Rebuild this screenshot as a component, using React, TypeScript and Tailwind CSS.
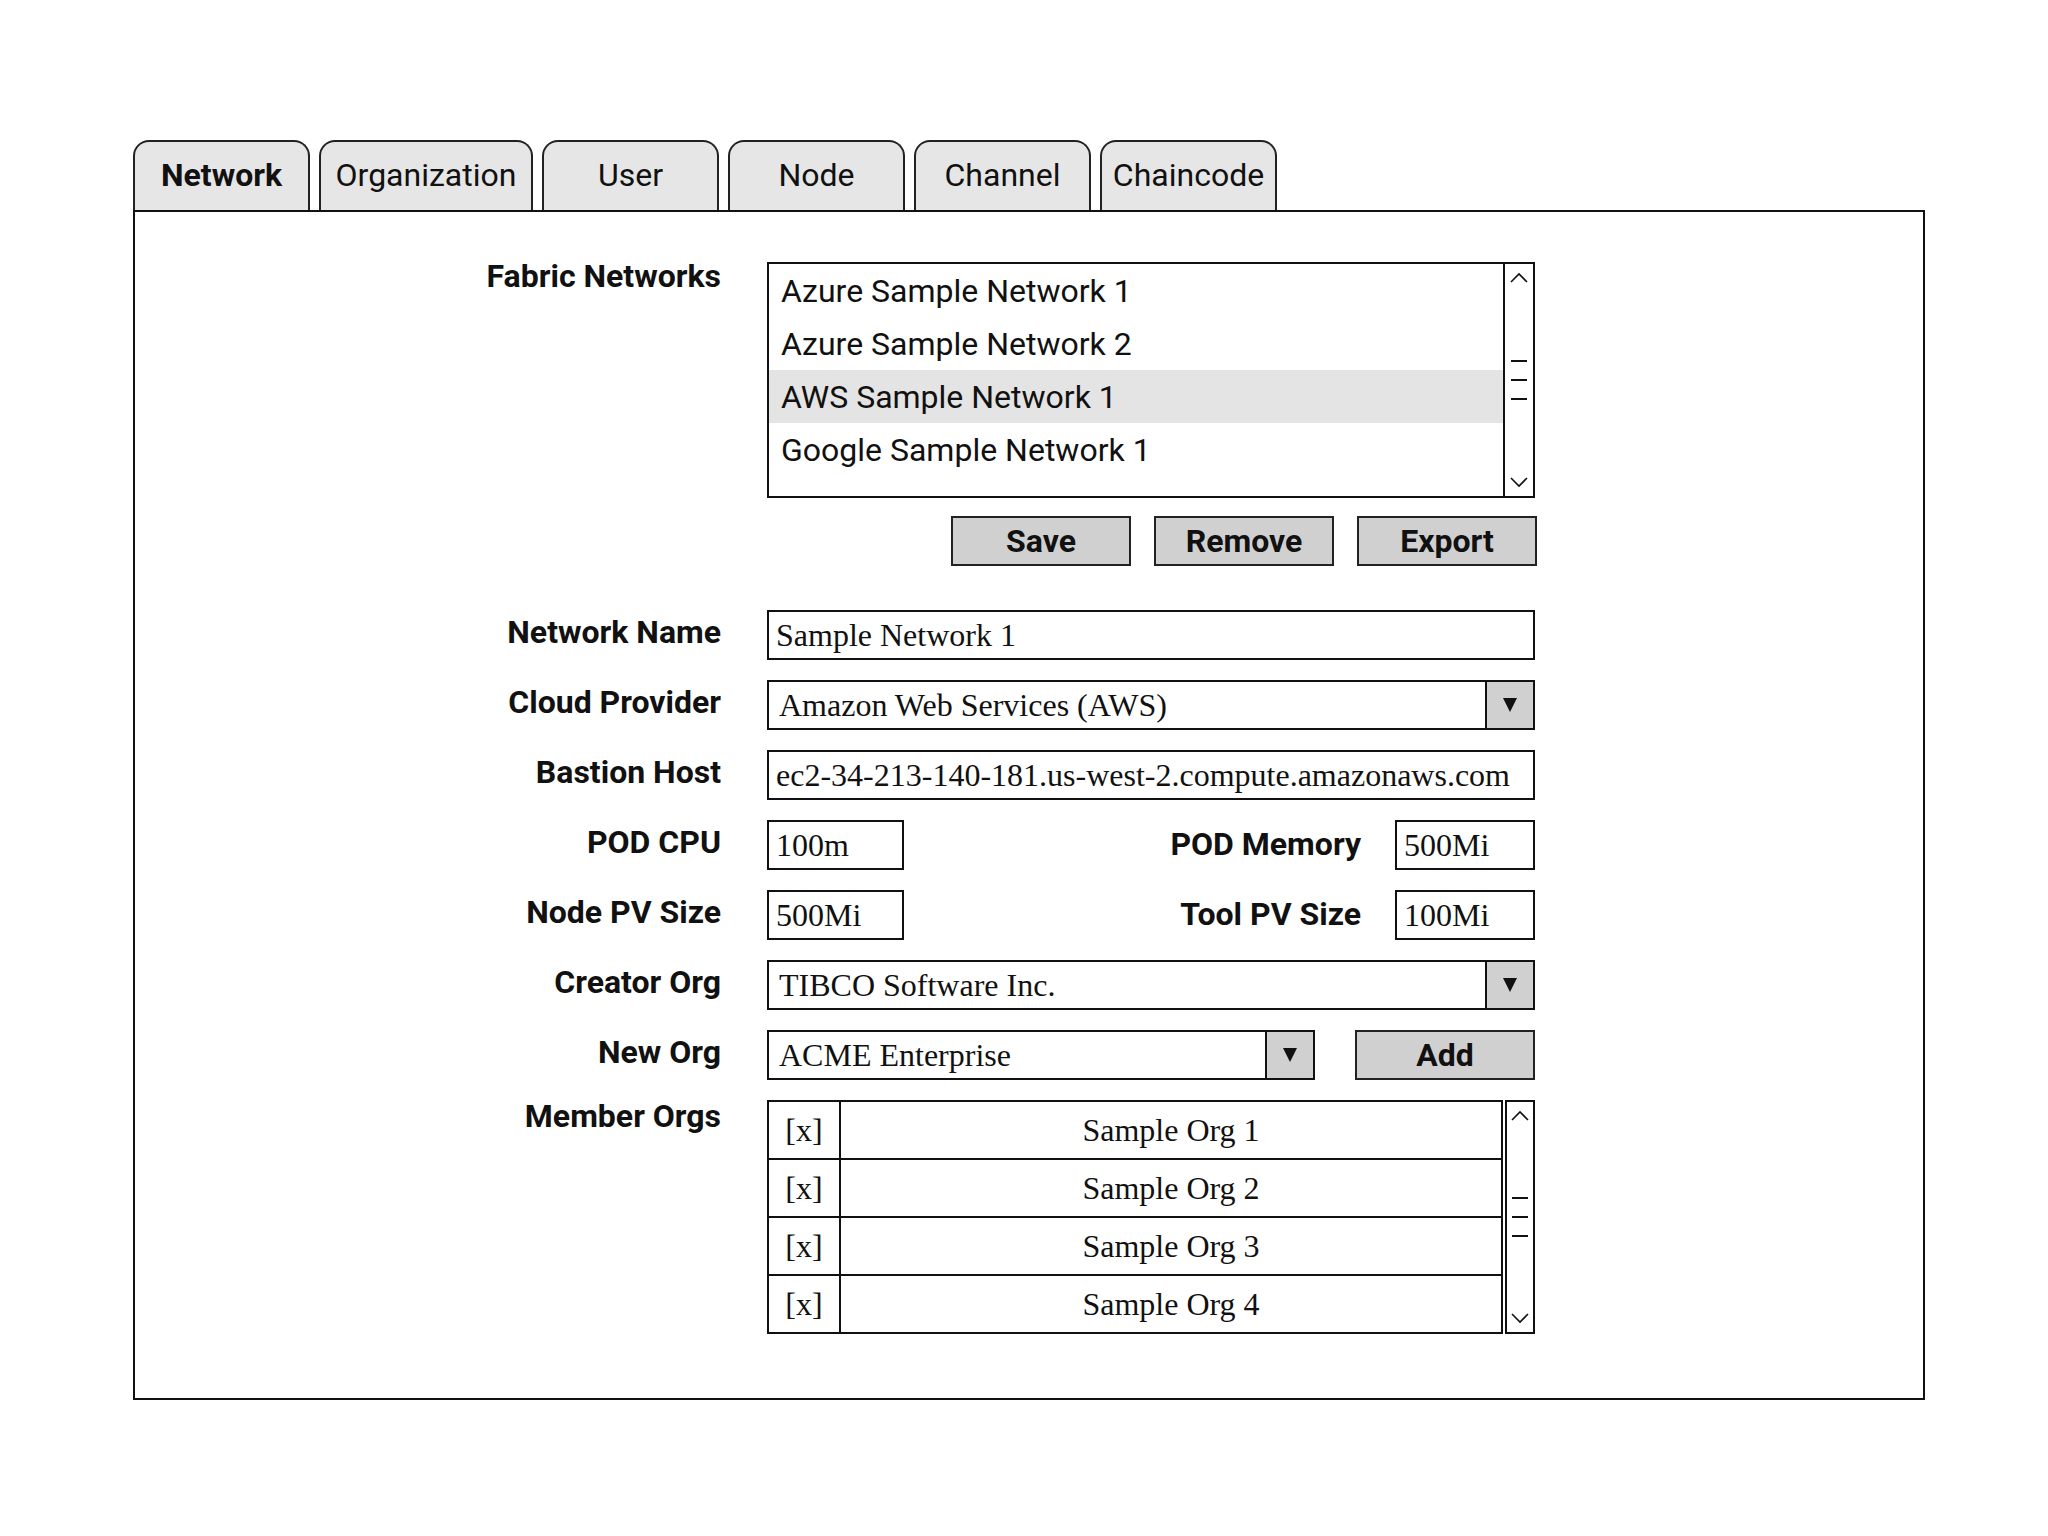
import { ReactNode } from "react";

const tabs = ["Network", "Organization", "User", "Node", "Channel", "Chaincode"];
const networks = [
  "Azure Sample Network 1",
  "Azure Sample Network 2",
  "AWS Sample Network 1",
  "Google Sample Network 1",
];
const memberOrgs = ["Sample Org 1", "Sample Org 2", "Sample Org 3", "Sample Org 4"];

const sans = "font-['Roboto','Liberation_Sans',sans-serif]";
const serif = "font-['Liberation_Serif','Times_New_Roman',serif]";

const Chevron = ({ up }: { up?: boolean }) => (
  <svg width="18" height="11" viewBox="0 0 18 11" className="shrink-0">
    <polyline
      points={up ? "1,10 9,2 17,10" : "1,1 9,9 17,1"}
      fill="none"
      stroke="#111"
      strokeWidth="1.6"
    />
  </svg>
);

const ScrollBar = ({ className }: { className: string }) => (
  <div className={`flex w-[30px] flex-col items-center justify-between py-[8px] ${className}`}>
    <Chevron up />
    <div className="flex flex-col gap-[17px]">
      <div className="h-[2px] w-[16px] bg-[#111]" />
      <div className="h-[2px] w-[16px] bg-[#111]" />
      <div className="h-[2px] w-[16px] bg-[#111]" />
    </div>
    <Chevron />
  </div>
);

const Arrow = () => (
  <div className="flex w-[48px] shrink-0 items-center justify-center self-stretch border-l-2 border-[#111] bg-[#d0d0d0]">
    <svg width="14" height="16" viewBox="0 0 14 16">
      <polygon points="0,1 14,1 7,15" fill="#111" />
    </svg>
  </div>
);

const Label = ({ children, className = "" }: { children: ReactNode; className?: string }) => (
  <div className={`whitespace-nowrap text-right text-[32px] font-bold leading-tight text-[#111] ${sans} ${className}`}>
    {children}
  </div>
);

const Field = ({ value, className = "", select }: { value: string; className?: string; select?: boolean }) => (
  <div className={`flex h-[50px] items-center border-2 border-[#111] bg-white ${className}`}>
    <span
      className={`flex-1 whitespace-nowrap text-[32px] leading-[44px] text-[#111] ${serif} ${
        select ? "pl-[10px]" : "pl-[7px]"
      }`}
    >
      {value}
    </span>
    {select && <Arrow />}
  </div>
);

const Row = ({ label, children }: { label: string; children: ReactNode }) => (
  <div className="flex h-[50px] items-center">
    <Label className="-mt-[7px] w-[588px] pr-[2px]">{label}</Label>
    <div className="ml-[44px] flex w-[768px] items-center">{children}</div>
  </div>
);

const GrayButton = ({ children, className = "" }: { children: ReactNode; className?: string }) => (
  <div
    className={`flex h-[50px] items-center justify-center border-2 border-[#222] bg-[#d0d0d0] text-[32px] font-bold text-[#111] ${sans} ${className}`}
  >
    {children}
  </div>
);

export default function App() {
  return (
    <div className="min-h-screen w-[2048px] bg-white pl-[133px] pt-[140px]">
      <div className="flex gap-[9px]">
        {tabs.map((t, i) => (
          <div
            key={t}
            className={`flex h-[70px] items-center justify-center rounded-t-[16px] border-2 border-b-0 border-[#222] bg-[#e6e6e6] pb-[2px] text-[32px] text-[#111] ${sans} ${
              i === 1 ? "w-[214px]" : "w-[177px]"
            } ${i === 0 ? "font-bold" : ""}`}
          >
            {t}
          </div>
        ))}
      </div>

      <div className="h-[1190px] w-[1792px] border-2 border-[#111] pt-[50px]">
        {/* Fabric networks */}
        <div className="flex">
          <Label className="-mt-[6px] w-[588px] pr-[2px]">Fabric Networks</Label>
          <div className="ml-[44px] flex h-[236px] w-[768px] border-2 border-[#111]">
            <div className="flex-1">
              {networks.map((n, i) => (
                <div
                  key={n}
                  className={`flex h-[53px] items-center pl-[12px] text-[32px] text-[#111] ${sans} ${
                    i === 2 ? "bg-[#e4e4e4]" : ""
                  }`}
                >
                  {n}
                </div>
              ))}
            </div>
            <ScrollBar className="border-l-2 border-[#111]" />
          </div>
        </div>

        <div className="ml-[816px] mt-[18px] flex w-[586px] justify-between">
          <GrayButton className="w-[180px]">Save</GrayButton>
          <GrayButton className="w-[180px]">Remove</GrayButton>
          <GrayButton className="w-[180px]">Export</GrayButton>
        </div>

        <div className="mt-[44px] flex flex-col gap-[20px]">
          <Row label="Network Name">
            <Field value="Sample Network 1" className="w-full" />
          </Row>
          <Row label="Cloud Provider">
            <Field value="Amazon Web Services (AWS)" className="w-full" select />
          </Row>
          <Row label="Bastion Host">
            <Field value="ec2-34-213-140-181.us-west-2.compute.amazonaws.com" className="w-full" />
          </Row>
          <Row label="POD CPU">
            <Field value="100m" className="w-[137px]" />
            <Label className="-mt-[2px] flex-1 pr-[34px]">POD Memory</Label>
            <Field value="500Mi" className="w-[140px]" />
          </Row>
          <Row label="Node PV Size">
            <Field value="500Mi" className="w-[137px]" />
            <Label className="-mt-[2px] flex-1 pr-[34px]">Tool PV Size</Label>
            <Field value="100Mi" className="w-[140px]" />
          </Row>
          <Row label="Creator Org">
            <Field value="TIBCO Software Inc." className="w-full" select />
          </Row>
          <Row label="New Org">
            <Field value="ACME Enterprise" className="w-[548px]" select />
            <GrayButton className="ml-auto w-[180px]">Add</GrayButton>
          </Row>

          <div className="flex">
            <Label className="-mt-[4px] w-[588px] pr-[2px]">Member Orgs</Label>
            <div className="ml-[44px] flex w-[768px] gap-[2px]">
              <div className="flex-1 border-2 border-b-0 border-[#111]">
                {memberOrgs.map((o) => (
                  <div key={o} className={`flex h-[58px] border-b-2 border-[#111] text-[32px] text-[#111] ${serif}`}>
                    <div className="flex w-[72px] items-center justify-center border-r-2 border-[#111]">[x]</div>
                    <div className="flex flex-1 items-center justify-center">{o}</div>
                  </div>
                ))}
              </div>
              <ScrollBar className="border-2 border-[#111]" />
            </div>
          </div>
        </div>
      </div>
    </div>
  );
}
